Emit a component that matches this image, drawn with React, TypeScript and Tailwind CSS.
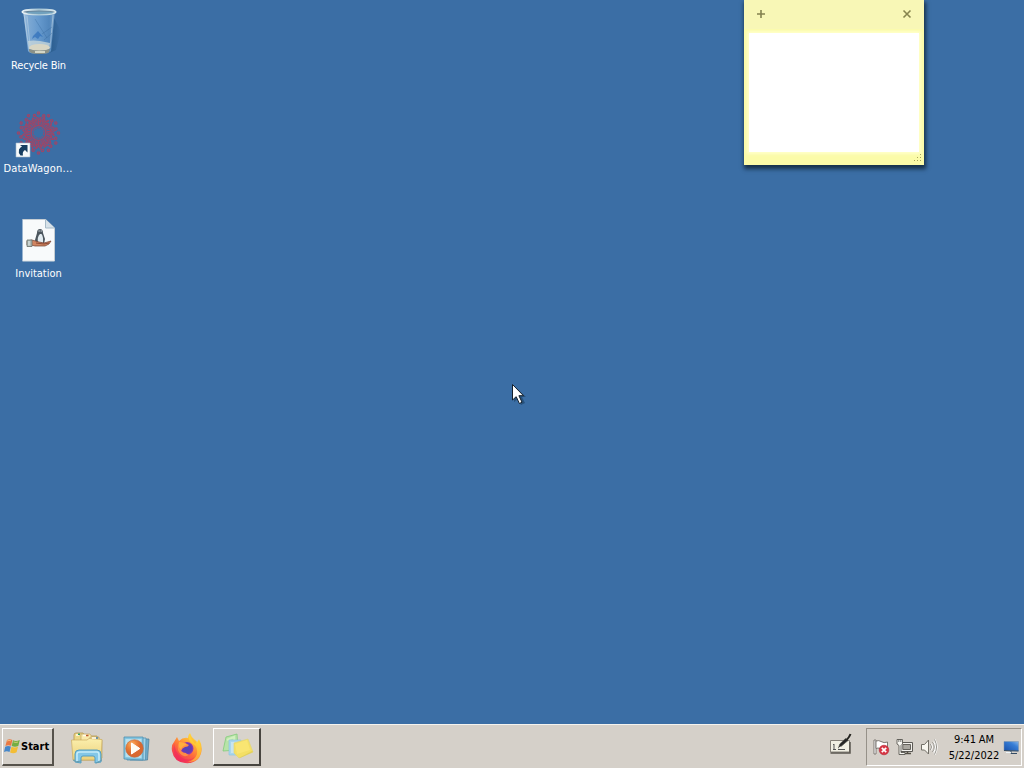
import React from "react";

const uiFont = "font-['DejaVu_Sans_Condensed','DejaVu_Sans',sans-serif] [font-stretch:condensed]";

function RecycleBinIcon() {
  return (
    <svg width="48" height="48" viewBox="0 0 48 48" className="block">
      <defs>
        <linearGradient id="binGlass" x1="0" y1="0" x2="1" y2="0">
          <stop offset="0" stopColor="#a9c6e2" />
          <stop offset="0.15" stopColor="#7faad4" />
          <stop offset="0.5" stopColor="#6599cd" />
          <stop offset="0.82" stopColor="#5186bc" />
          <stop offset="1" stopColor="#7ba4ca" />
        </linearGradient>
        <linearGradient id="binRim" x1="0" y1="0" x2="1" y2="0">
          <stop offset="0" stopColor="#eef5f8" />
          <stop offset="0.5" stopColor="#a5c4d3" />
          <stop offset="1" stopColor="#dae9ee" />
        </linearGradient>
        <linearGradient id="binShade" x1="0" y1="0" x2="1" y2="0">
          <stop offset="0" stopColor="#1d4f7b" stopOpacity=".6" />
          <stop offset="1" stopColor="#1d4f7b" stopOpacity="0" />
        </linearGradient>
      </defs>
      <g transform="translate(1 -2)">
        <path d="M39 13L46 26L41 45L34 48Z" fill="url(#binShade)" />
        <path d="M8 7L40 7L36 48Q35 51 24 51Q14 51 13 48Z" transform="translate(0 -2)" fill="url(#binGlass)" />
        <path d="M9 9L14 44M12 11L15 40M38 10L35 43" stroke="#c3d8e8" strokeWidth=".8" opacity=".65" />
        <path d="M18 31L23 26L28 32L25 31L23 34L20 32L17 34Z" fill="#2467b7" opacity=".6" />
        <path d="M27 29L37 22M29 35L37 28M20 14L32 33" stroke="#305f94" opacity=".3" fill="none" />
        <path d="M13 36Q18 35 25 36L35 38L34 44H14Z" fill="#c5d6db" opacity=".8" />
        <ellipse cx="24.5" cy="42.5" rx="10.5" ry="3.6" fill="#d8d6c4" />
        <path d="M14 44Q24 47 35 44L34 47Q33 49 24 49Q15 49 14 46Z" fill="#8b9187" />
        <path d="M20 47L30 47" stroke="#e8e7d7" strokeWidth="1.6" />
        <ellipse cx="24" cy="7" rx="16.6" ry="2.5" fill="#69849a" stroke="url(#binRim)" strokeWidth="1.8" />
        <ellipse cx="25" cy="7.7" rx="13.5" ry="1.2" fill="#70a1be" />
      </g>
    </svg>
  );
}

function ShortcutIcon() {
  const spokes = Array.from({ length: 12 }, (_, i) => i * 30);
  return (
    <svg width="48" height="48" viewBox="0 0 48 48" className="block">
      <g transform="translate(24.5 22)" stroke="#b83c58" fill="none" strokeWidth="1.2" opacity=".8">
        {spokes.map((angle) => (
          <g key={angle} transform={`rotate(${angle})`}>
            <path d="M0-8V-13L-3-17M0-13L3-16M-3-8L-5-13M3-8L5-12" />
            <circle cx="0" cy="-20" r="1.1" />
            <circle cx="-4" cy="-17.5" r="1.2" />
            <circle cx="4" cy="-12.5" r=".8" />
          </g>
        ))}
        <circle r="7.5" strokeWidth="1.5" />
        <circle r="5.3" strokeWidth=".9" strokeDasharray="2 1" />
        <circle r="11.5" strokeDasharray="3 3" />
        <circle r="15.2" strokeDasharray="2 3" />
      </g>
      <path d="M2 32H16V46H2Z" fill="#f7fafb" stroke="#aabdcc" strokeWidth=".6" />
      <path d="M6.5 44.5Q4 41.5 5 38.5Q6 36.5 8 35.5L6 34H13.5V41.5L11 39Q8 40.5 9 44.5Z" fill="#173e61" />
    </svg>
  );
}

function InvitationIcon() {
  return (
    <svg width="48" height="48" viewBox="0 0 48 48" className="block">
      <g transform="translate(1 0)">
        <path d="M7.5 4.5H31L39.5 13V46H7.5Z" fill="#f8fafb" />
        <path d="M7.5 4.5H30.5L39.5 13V46" fill="none" stroke="#c5cdd3" />
        <path d="M30.5 4.5V13H39.5" fill="#d7e2e9" stroke="#a6bac8" />
        <path d="M7.5 46H39.5" stroke="#d8dfe2" />
        <path d="M25 14Q22 14 22 18L20 25L21 29H29L30 24L28 18Q28 14 25 14Z" fill="#4b555d" />
        <path d="M25 19Q22 21 23 29H28Q28.5 21 26.5 19Z" fill="#e2ebf0" />
        <path d="M23.5 16H26.8" stroke="#e7eef2" strokeDasharray="1.2 .9" />
        <path d="M12 26L17 25L24 27L29 28L36 26L34 29L30 31L20 31L16 30L12 30Z" fill="#d08460" stroke="#713c2c" strokeWidth=".7" />
        <path d="M21 28L29 29L34 28" stroke="#8e4b35" fill="none" />
        <path d="M12 25H17V31.5H12Z" fill="#aeb9b4" stroke="#68706b" strokeWidth=".8" />
        <path d="M14 26V30.5" stroke="#e6eeee" />
      </g>
    </svg>
  );
}

function WindowsLogo() {
  return (
    <svg width="17" height="17" viewBox="0 0 17 17" className="block shrink-0">
      <path d="M3 2Q5.5 .5 8.4 2L7.1 7.8Q4.2 6.5 1.4 8Z" fill="#e97943" />
      <path d="M9 2.3Q12 4 15.8 2L14.3 8Q11 9.5 7.7 8Z" fill="#74ae43" />
      <path d="M1.2 8.7Q4 7.2 6.9 8.5L5.5 14Q2.8 12.6 0 14Z" fill="#4687c9" />
      <path d="M7.5 8.8Q10.6 10.3 14 8.8L12.6 14.3Q9.3 16 6.1 14.4Z" fill="#f3bd35" />
      <path d="M3 3Q5 1.9 7 2.8M9.6 4Q12 5 14 4" stroke="#ffda91" opacity=".65" fill="none" />
    </svg>
  );
}

function ExplorerIcon() {
  return (
    <svg width="34" height="32" viewBox="0 0 34 32" className="block">
      <defs>
        <linearGradient id="folder" x1="0" y1="0" x2="0" y2="1">
          <stop stopColor="#fbefad" />
          <stop offset="1" stopColor="#ecd17b" />
        </linearGradient>
      </defs>
      <path d="M4 27V3Q4 1 6 1H13L15 4H27V8H31V28H4Z" fill="#ebd887" stroke="#b99749" strokeWidth=".8" />
      <path d="M11 5V2H20L22 5H29V25H11Z" fill="#faeaab" stroke="#bda465" strokeWidth=".7" />
      <path d="M20 8V5H28L30 8H32V26H20Z" fill="#f4df96" stroke="#bda465" strokeWidth=".7" />
      <path d="M1.5 8H17L19 6.5L32 7.5L31 28H3Z" fill="url(#folder)" stroke="#cbae60" strokeWidth=".7" />
      <path d="M6 3H9M13 3.5H17M22 6H26" stroke="#fffbed" strokeWidth="1.4" />
      <path d="M8 2.3H10" stroke="#2c9e69" strokeWidth="1.5" />
      <path d="M16 3.5H18.5" stroke="#bd5b30" strokeWidth="1.5" />
      <path d="M26 6H28" stroke="#497fab" strokeWidth="1.5" />
      <path d="M5 30V22Q5 18 9 18H27Q31 18 31 22V30L25 31V26Q25 24 23 24H13Q11 24 11 26V31Z" fill="#83c7e7" stroke="#4c98bd" strokeWidth=".9" />
      <path d="M7 29V22Q7 20 10 20H27Q29 20 29 23V29" fill="none" stroke="#c5ecf9" strokeWidth="1.6" />
      <path d="M3 28Q6 31 11 29M26 31L32 28" stroke="#669bad" fill="none" />
    </svg>
  );
}

function MediaIcon() {
  return (
    <svg width="28" height="28" viewBox="0 0 28 28" className="block">
      <defs>
        <radialGradient id="mediaOrange" cx=".35" cy=".25">
          <stop stopColor="#f9b26b" />
          <stop offset=".5" stopColor="#ee873b" />
          <stop offset="1" stopColor="#d9682f" />
        </radialGradient>
      </defs>
      <path d="M7 4H26L24.5 25H7Z" fill="#71abc9" stroke="#477b96" strokeWidth=".7" />
      <path d="M4 3H23L22.5 25H4Z" fill="#a4d2e6" stroke="#5193b5" strokeWidth=".8" />
      <path d="M1 2H20L20 25L1 24Z" fill="#83c6e2" stroke="#518fae" strokeWidth=".8" />
      <path d="M2.5 4H18.5V23L2.5 22Z" fill="#b8e0ed" />
      <circle cx="11.5" cy="13.5" r="8.8" fill="url(#mediaOrange)" stroke="#bd6840" strokeWidth=".6" />
      <path d="M8.5 8L16.8 13.5L8.5 19Z" fill="#fffdf2" stroke="#fff" strokeLinejoin="round" />
    </svg>
  );
}

function FirefoxIcon() {
  return (
    <svg width="32" height="32" viewBox="0 0 32 32" className="block">
      <defs>
        <linearGradient id="foxFire" x1=".9" y1="0" x2=".25" y2="1">
          <stop stopColor="#fff24a" />
          <stop offset=".28" stopColor="#ffbd35" />
          <stop offset=".6" stopColor="#ff713a" />
          <stop offset="1" stopColor="#ef245e" />
        </linearGradient>
        <radialGradient id="foxOrb">
          <stop stopColor="#4e45bc" />
          <stop offset=".7" stopColor="#663cb4" />
          <stop offset="1" stopColor="#a13aac" />
        </radialGradient>
      </defs>
      <path d="M3 9L6 4L8 8Q12 4 17 5Q17 2 19 0Q20 4 24 7Q26 8 26 10L28 6Q34 17 27 26Q22 31 14 30Q3 29 1 18Q0 12 3 9Z" fill="url(#foxFire)" />
      <path d="M18 1Q16 8 22 11Q27 14 26 21Q24 27 17 29Q29 29 30 18Q30 10 26 8L24 11Q20 6 18 1Z" fill="#ffdc3d" opacity=".55" />
      <path d="M3 10Q4 19 10 24Q17 29 24 24Q17 31 8 27Q1 22 3 10Z" fill="#ef245f" opacity=".5" />
      <circle cx="16" cy="15.5" r="6.5" fill="url(#foxOrb)" />
      <path d="M8 9Q13 8 16 11L18 12Q17 14 14 14Q11 15 10 18Q12 20 15 20Q16 22 18 21Q16 24 13 23Q9 22 7 17Q6 13 8 9Z" fill="#ff8a44" />
      <path d="M8 9Q13 9 16 12Q12 12 10 16Q7 15 8 9Z" fill="#ffae3d" />
    </svg>
  );
}

function NotesIcon() {
  return (
    <svg width="34" height="28" viewBox="0 0 34 28" className="block">
      <path d="M6 4L17 1L18 17L3 18Z" fill="#b8e3a8" stroke="#82cd7a" strokeWidth=".8" />
      <path d="M7 7L14 4L15 15" fill="none" stroke="#d2f0bf" strokeWidth="2" />
      <path d="M9 7L21 7L21 22L9 22Z" fill="#a9d6ed" stroke="#87c5e1" strokeWidth=".6" />
      <path d="M11 9H21V20H11Z" fill="#c8e4ee" />
      <path d="M14 10L28 6L33 19L19 25L14 20Z" fill="#f4df65" stroke="#dfd579" strokeWidth=".7" />
      <path d="M15 11L27 7L30 17L17 21Z" fill="#fbea7b" opacity=".6" />
      <path d="M19 25L32 18L33 19L20 25Z" fill="#dfcb4e" opacity=".7" />
    </svg>
  );
}

function TabletIcon() {
  return (
    <svg width="24" height="24" viewBox="0 0 24 24" className="block">
      <path d="M1.5 7.5H20.5V19H1.5Z" fill="#f1efe3" stroke="#858078" />
      <path d="M1.5 20H21V9" stroke="#5a564f" strokeWidth="1.5" fill="none" />
      <path d="M5 11V16M4 12L5 11M4 16.5H7M9 16.5H16" stroke="#555" strokeWidth="1" />
      <path d="M9.5 15L10.8 11L16.5 5.5L19 7.5L12.5 13Z" fill="#252525" stroke="#55544e" strokeWidth=".7" />
      <path d="M17.5 7Q20.5 4 21.5 1" stroke="#24231f" strokeWidth="2" fill="none" />
      <path d="M10 15L12 14" stroke="#fff" />
    </svg>
  );
}

function FlagIcon() {
  return (
    <svg width="18" height="18" viewBox="0 0 18 18" className="block">
      <path d="M2 2H4V16H2Z" fill="#fff" stroke="#69665f" strokeWidth=".8" />
      <path d="M4 3Q7 2 9 3.5Q12 5.5 15.5 4V11Q12 12.5 8 10.5Q6 9.5 4 10.5Z" fill="#fff" stroke="#716c66" strokeWidth=".9" />
      <circle cx="12" cy="12" r="4.8" fill="#d83745" stroke="#b32735" strokeWidth=".6" />
      <path d="M9.8 9.8L14.2 14.2M14.2 9.8L9.8 14.2" stroke="#fff" strokeWidth="1.7" />
    </svg>
  );
}

function NetworkIcon() {
  return (
    <svg width="18" height="18" viewBox="0 0 18 18" className="block">
      <path d="M4.5 4.5H16.5V13.5H4.5Z" fill="#f3f1ed" stroke="#5b5954" />
      <path d="M6.8 6.5H14.5V11.5H6.8Z" fill="#aaa7a0" stroke="#65625c" />
      <path d="M8 15.5H15M11.5 13.5V15.5" stroke="#555047" strokeWidth="1.5" />
      <path d="M1 1.5H6.5V6L5 7.5V14.5H9V16.5H3V7.5L1 6Z" fill="#f8f7f2" stroke="#5b5954" strokeWidth=".9" />
      <path d="M2.8 1V4M4.8 1V4" stroke="#5b5954" strokeWidth=".8" />
    </svg>
  );
}

function SoundIcon() {
  return (
    <svg width="18" height="18" viewBox="0 0 18 18" className="block">
      <path d="M1.5 6.5H4.5L8.5 2V16L4.5 12H1.5Z" fill="#f8f6ef" stroke="#716e66" strokeLinejoin="round" />
      <path d="M10.8 6Q13 9 10.8 12M13 4Q17 9 13 14M14.5 1.5Q19 9 14.5 16.5" fill="none" stroke="#fff" strokeWidth="2" />
      <path d="M10.5 6Q12.5 9 10.5 12M12.5 4Q16 9 12.5 14M14.5 1.5Q18.5 9 14.5 16.5" fill="none" stroke="#77736a" strokeWidth=".8" />
    </svg>
  );
}

function ShowDesktopIcon() {
  return (
    <svg width="16" height="16" viewBox="0 0 16 16" className="block">
      <defs>
        <linearGradient id="screen" x1="0" y1="1" x2="1" y2="0">
          <stop stopColor="#174fa9" />
          <stop offset=".65" stopColor="#367dd5" />
          <stop offset="1" stopColor="#85b5e8" />
        </linearGradient>
      </defs>
      <path d="M1 2.5H15.5V12L1 11.5Z" fill="url(#screen)" stroke="#7893ac" strokeWidth=".5" />
      <path d="M1 11.5L15.5 12M8 12V14.5H14" fill="none" stroke="#334c65" strokeWidth="1" />
      <path d="M3 13.5H8" stroke="#eef6fa" />
    </svg>
  );
}

type DesktopItemProps = {
  label: string;
  icon: React.ReactNode;
  labelClass: string;
};

function DesktopItem({ label, icon, labelClass }: DesktopItemProps) {
  return (
    <div className="flex h-[104px] w-[76px] flex-col items-center">
      {icon}
      <span className={`whitespace-nowrap text-[11px] leading-[14px] text-white ${labelClass}`}>{label}</span>
    </div>
  );
}

function StickyNote() {
  return (
    <div className="absolute top-0 left-[744px] flex h-[165px] w-[180px] flex-col bg-[#fbfba8] shadow-[1px_3px_4px_1px_rgba(10,28,44,0.75)]">
      <div className="flex h-[29px] items-center justify-between bg-[#f8f7b6] px-[12px] pb-[2px]">
        <svg width="10" height="10" viewBox="0 0 10 10"><path d="M5 1V9M1 5H9" stroke="#84824f" strokeWidth="1.6" /></svg>
        <svg width="10" height="10" viewBox="0 0 10 10"><path d="M1.5 1.5L8.5 8.5M8.5 1.5L1.5 8.5" stroke="#87854e" strokeWidth="1.6" /></svg>
      </div>
      <div className="mx-[5px] mt-[4px] h-[119px] bg-white shadow-[0_0_3px_2px_#ffffca]" />
      <div className="mt-auto mr-[2px] mb-[2px] flex justify-end">
        <svg width="9" height="9" viewBox="0 0 9 9" fill="#a6a45c">
          <path d="M7 0H8V1H7ZM4 3H5V4H4ZM7 3H8V4H7ZM1 6H2V7H1ZM4 6H5V7H4ZM7 6H8V7H7Z" />
        </svg>
      </div>
    </div>
  );
}

function Cursor() {
  return (
    <svg width="20" height="26" viewBox="0 0 20 26" className="absolute top-[383px] left-[511px]">
      <path d="M3 3V19L7 16L10 22L14 20L11 14H15Z" fill="#183c5c" opacity=".55" />
      <path d="M1.5 1.5V17L5.2 13.7L8.4 20.5L11 19.2L7.9 12.7H12.5Z" fill="#fff" stroke="#15202b" strokeWidth="1" />
    </svg>
  );
}

function Taskbar() {
  return (
    <footer className="flex h-[44px] items-start bg-[#d5d0c9] pt-[4px] shadow-[inset_0_1px_#f5f3ee]">
      <button className="ml-[2px] flex h-[38px] w-[52px] items-center border-t border-r-2 border-b-2 border-l border-t-white border-r-[#56524b] border-b-[#56524b] border-l-white bg-[#d5d0c9] pl-px">
        <WindowsLogo />
        <span className="mt-px whitespace-nowrap text-[11px] leading-[14px] font-bold text-black">Start</span>
      </button>
      <div className="ml-[16px] mt-[4px]"><ExplorerIcon /></div>
      <div className="mt-[7px] ml-[19px]"><MediaIcon /></div>
      <div className="mt-[5px] ml-[20px]"><FirefoxIcon /></div>
      <button className="ml-[10px] flex h-[38px] w-[48px] items-center justify-center border-t border-r-2 border-b-2 border-l border-t-white border-r-[#47443f] border-b-[#47443f] border-l-white bg-[#d8d3cc] pt-px">
        <NotesIcon />
      </button>
      <div className="ml-auto mt-[5px] mr-[13px]"><TabletIcon /></div>
      <div className="mr-[2px] flex h-[38px] w-[156px] shrink-0 items-center border border-t-[#969189] border-r-white border-b-white border-l-[#969189] pl-[5px]">
        <FlagIcon />
        <div className="ml-[6px]"><NetworkIcon /></div>
        <div className="ml-[6px]"><SoundIcon /></div>
        <div className="ml-[8px] w-[56px] pt-[2px] text-center text-[11px] leading-[16px] text-black">
          <div className="tracking-[-0.1px]">9:41 AM</div>
          <div className="tracking-[-0.05px]">5/22/2022</div>
        </div>
        <div className="ml-px"><ShowDesktopIcon /></div>
      </div>
    </footer>
  );
}

export default function App() {
  return (
    <div className={`relative flex h-[768px] w-[1024px] flex-col overflow-hidden bg-[#3b6ea5] ${uiFont}`}>
      <main className="flex-1 pt-[7px]">
        <DesktopItem label="Recycle Bin" icon={<RecycleBinIcon />} labelClass="mt-[4px] pl-px tracking-[-0.2px]" />
        <DesktopItem label="DataWagon..." icon={<ShortcutIcon />} labelClass="mt-[3px] tracking-[0.2px]" />
        <DesktopItem label="Invitation" icon={<InvitationIcon />} labelClass="mt-[4px] pl-px tracking-[-0.03px]" />
      </main>
      <StickyNote />
      <Cursor />
      <Taskbar />
    </div>
  );
}
